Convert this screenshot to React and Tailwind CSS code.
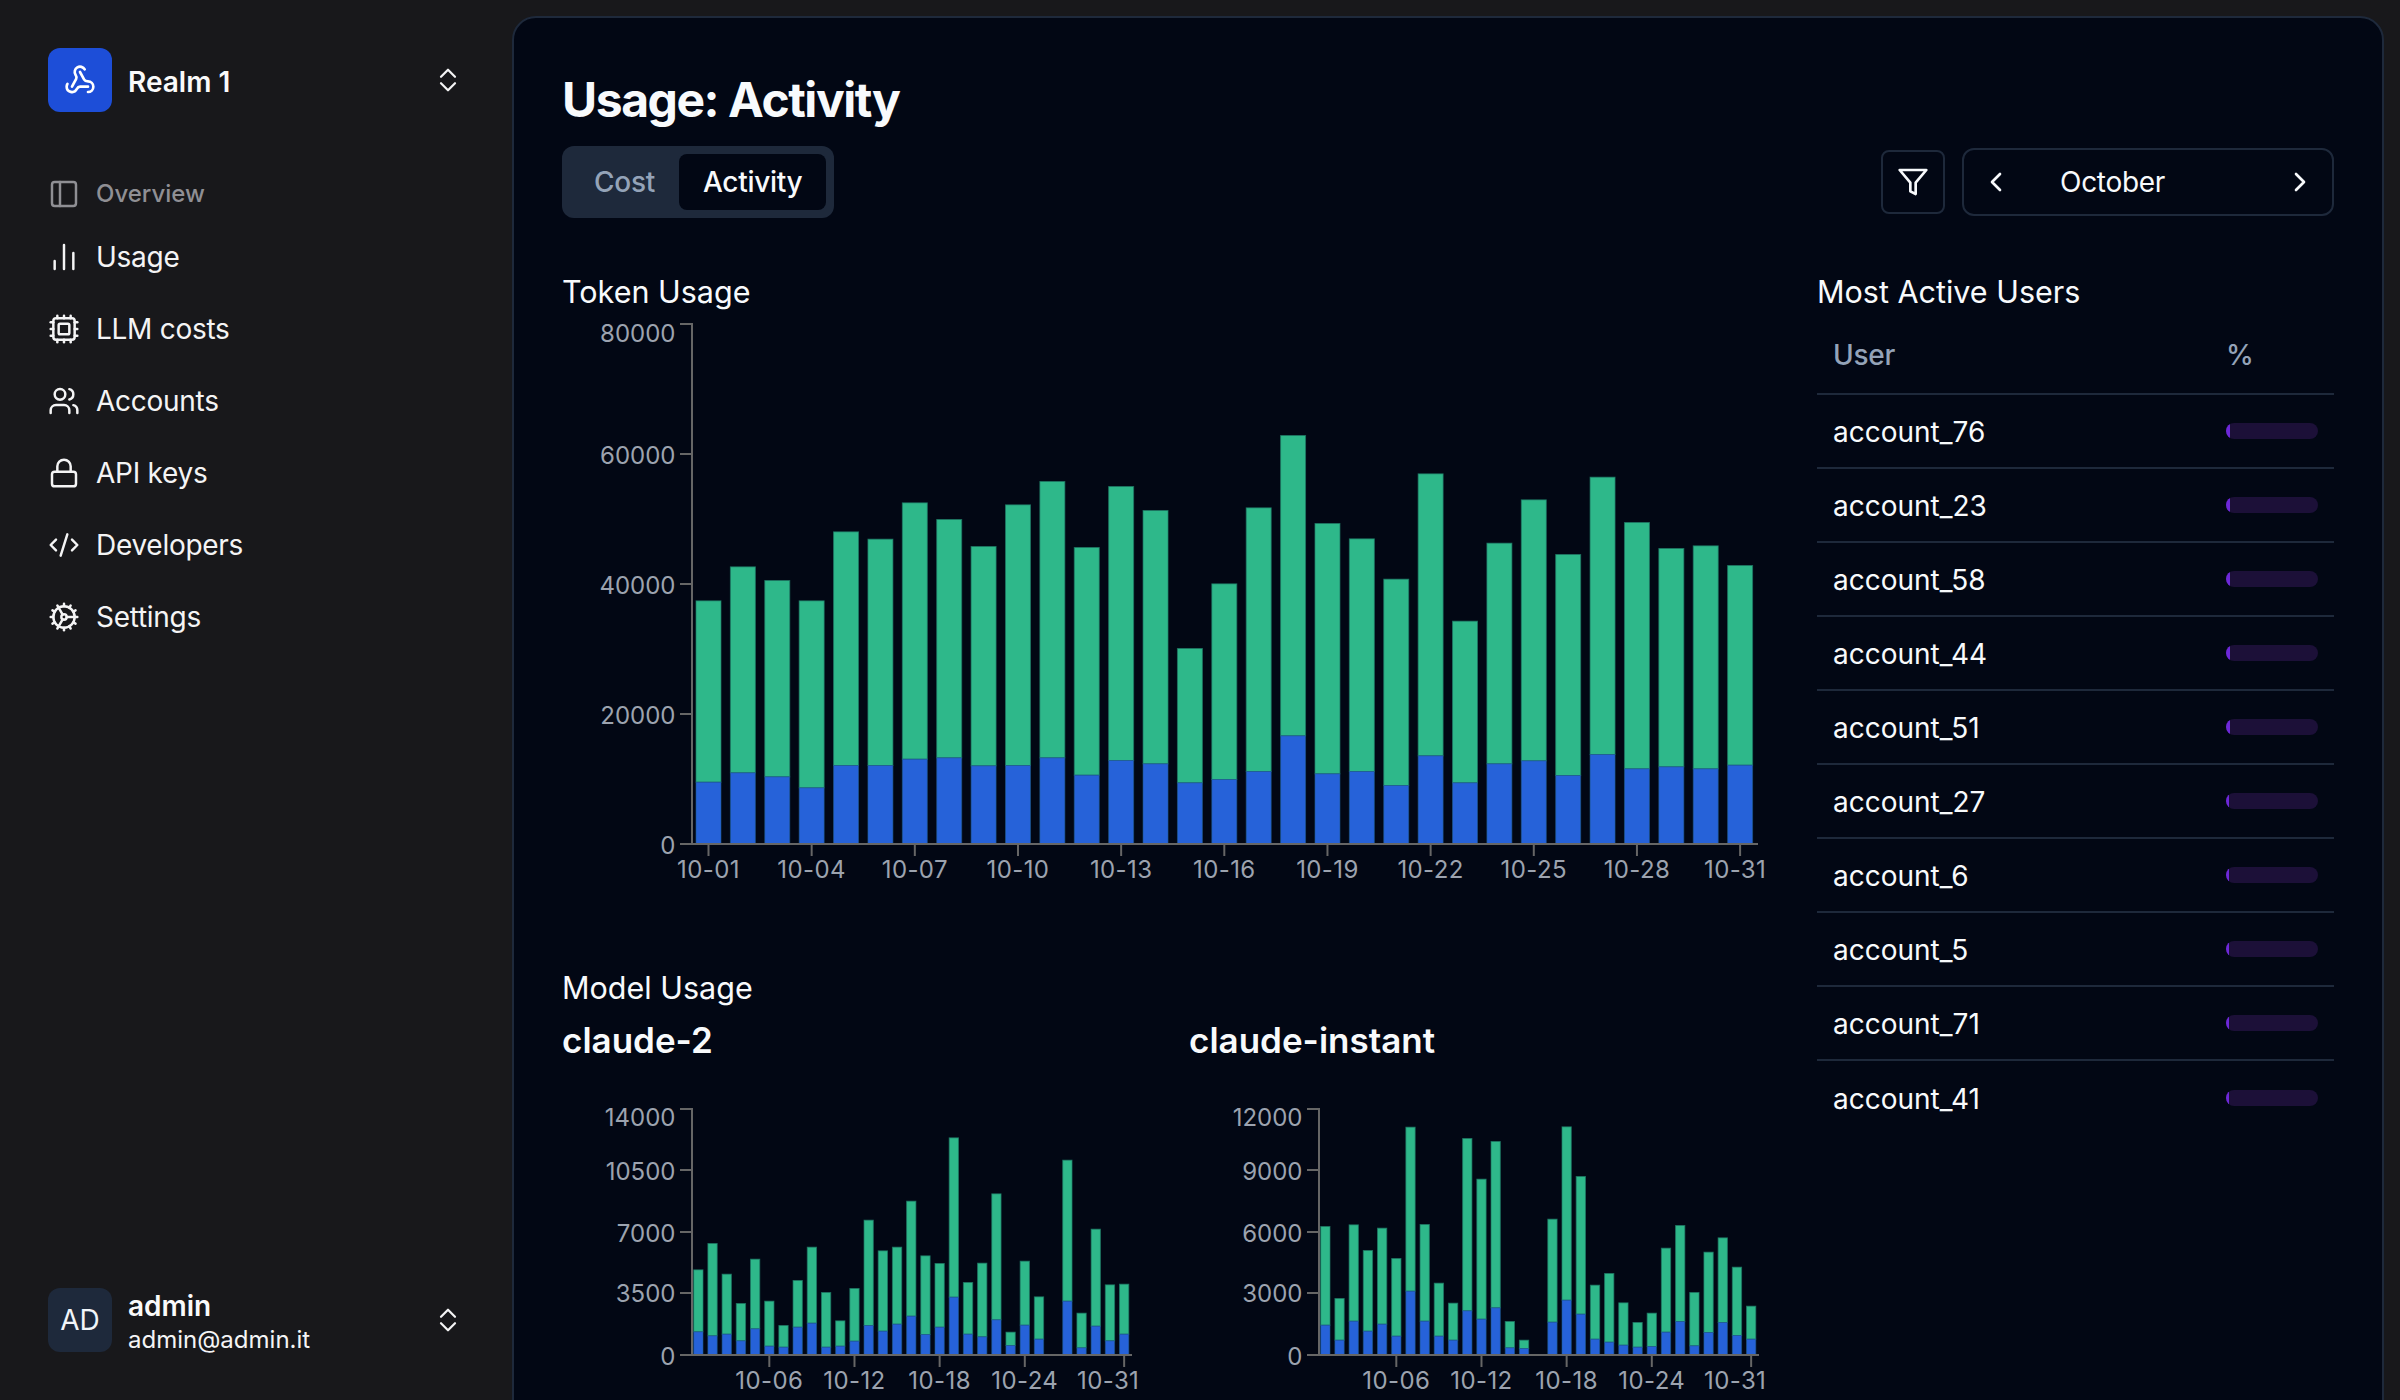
import React from "react";
import { PanelLeft, ChartNoAxesColumn, Cpu, Users, Lock, CodeXml, Cog, Webhook, ChevronLeft, ChevronRight } from "lucide-react";

const FONT = { fontFamily: "Inter, sans-serif" };

// Reference measurements, in zoomed pixels: total top / blue top per day (null = no bar).
const MAIN_TOP = [601,499,540,601,394,416,307,357,438,313,243,441,258,330,744,550,322,105,369,415,536,220,662,428,298,462,230,366,444,436,495];
const MAIN_BLUE = [1145,1117,1129,1162,1095,1095,1076,1072,1096,1095,1072,1124,1080,1090,1147,1137,1113,1006,1120,1113,1155,1066,1147,1090,1081,1125,1062,1105,1099,1105,1094];
const C2_TOP = [624,545,637,725,592,718,791,656,556,692,777,680,475,567,556,418,582,605,228,662,604,396,811,598,705,null,295,754,502,669,667];
const C2_BLUE = [810,822,817,837,801,853,856,796,784,856,853,838,791,808,787,763,818,796,706,817,825,774,851,790,832,null,718,858,793,837,817];
const CI_TOP = [494,710,489,566,499,590,196,488,664,724,230,352,239,779,835,null,472,195,344,670,635,723,782,754,559,491,692,571,528,616,733];
const CI_BLUE = [790,835,778,808,787,823,688,778,823,835,747,772,738,858,860,null,781,715,757,832,841,850,856,854,811,779,852,812,782,821,832];

function Chart({ width, height, axisX, axisRight, axisTop, baseY, barW, barOff, tops, blues, refBase, yLabels, xTicks }) {
  const pitch = (axisRight - axisX) / 31;
  const h = (v) => (refBase - v) / 3;
  return (
    <svg width={width} height={height} className="block overflow-visible" style={FONT}>
      {tops.map((t, i) => {
        if (t === null) return null;
        const x = axisX + barOff + i * pitch;
        const total = h(t);
        const blue = h(blues[i]);
        return (
          <g key={i}>
            <rect x={x + 0.5} y={baseY - total + 0.5} width={barW - 1} height={total - blue} fill="#2eb88a" stroke="#1f7a66" strokeOpacity="0.7" strokeWidth="1" />
            <rect x={x + 0.5} y={baseY - blue + 0.5} width={barW - 1} height={blue - 0.5} fill="#2662d9" stroke="#1f5c8f" strokeOpacity="0.6" strokeWidth="1" />
          </g>
        );
      })}
      <path d={`M${axisX - 12} ${axisTop}H${axisX}V${baseY}H${axisRight}`} fill="none" stroke="#666666" strokeWidth="2" />
      {yLabels.map(([label, y, ty], i) => (
        <g key={i}>
          <line x1={axisX - 12} x2={axisX} y1={y} y2={y} stroke="#666666" strokeWidth="2" />
          <text x={axisX - 16.5} y={ty} textAnchor="end" dominantBaseline="central" fontSize="24" fill="#9ca3af">{label}</text>
        </g>
      ))}
      {xTicks.map(([label, i, anchorShift], k) => {
        const cx = axisX + barOff + barW / 2 + i * pitch;
        return (
          <g key={k}>
            <line x1={cx} x2={cx} y1={baseY} y2={baseY + 12} stroke="#666666" strokeWidth="2" />
            <text x={cx + anchorShift} y={baseY + 25} textAnchor="middle" dominantBaseline="central" fontSize="24" letterSpacing="0.4" fill="#9ca3af">{label}</text>
          </g>
        );
      })}
    </svg>
  );
}

function UpDown() {
  return (
    <svg width="20" height="28" viewBox="0 0 20 28" fill="none" stroke="#f4f4f5" strokeWidth="2.2" strokeLinecap="round" strokeLinejoin="round">
      <path d="M3 10.8 10 3.7l7 7.1" />
      <path d="M3 17.2 10 24.3l7-7.1" />
    </svg>
  );
}

const NAV = [
  [ChartNoAxesColumn, "Usage"],
  [Cpu, "LLM costs"],
  [Users, "Accounts"],
  [Lock, "API keys"],
  [CodeXml, "Developers"],
  [Cog, "Settings"],
];

const USERS = [
  ["account_76", 4], ["account_23", 3.5], ["account_58", 3.5], ["account_44", 3.5], ["account_51", 3.5],
  ["account_27", 3], ["account_6", 3], ["account_5", 3], ["account_71", 3], ["account_41", 3],
];

export default function App() {
  return (
    <div className="flex h-[1400px] w-[2400px] overflow-hidden bg-[#18181b] text-[#f8fafc]" style={FONT}>
      <aside className="flex h-[1400px] w-[512px] shrink-0 flex-col pl-[48px] pr-[54px]">
        <div className="mt-[48px] flex h-[64px] items-center">
          <div className="flex h-[64px] w-[64px] items-center justify-center rounded-[12px] bg-[#1d4ed8]">
            <Webhook size={32} strokeWidth={2} color="#ffffff" />
          </div>
          <span className="ml-[16px] pt-[3px] text-[28px] font-semibold leading-[36px] text-[#fafafa]">Realm 1</span>
          <div className="ml-auto"><UpDown /></div>
        </div>
        <div className="mt-[58px] flex h-[48px] items-center gap-[16px] text-[24px] font-medium text-[#8f8f94]">
          <PanelLeft size={32} strokeWidth={1.85} />
          <span>Overview</span>
        </div>
        <nav className="mt-[7px] flex flex-col gap-[8px]">
          {NAV.map(([Icon, label]) => (
            <div key={label} className="flex h-[64px] items-center gap-[16px] text-[28px] tracking-[-0.01em] text-[#f4f4f5]">
              <Icon size={32} strokeWidth={1.85} />
              <span>{label}</span>
            </div>
          ))}
        </nav>
        <div className="mt-auto mb-[48px] flex h-[64px] items-center">
          <div className="flex h-[64px] w-[64px] items-center justify-center rounded-[12px] bg-[#1e293b] text-[28px] text-[#f1f5f9]">AD</div>
          <div className="ml-[16px] flex flex-col pt-[3px]">
            <span className="text-[28px] font-semibold leading-[36px] text-[#fafafa]">admin</span>
            <span className="text-[24px] leading-[32px] text-[#f4f4f5]">admin@admin.it</span>
          </div>
          <div className="ml-auto"><UpDown /></div>
        </div>
      </aside>

      <main className="mt-[16px] mr-[16px] h-[1400px] min-w-0 flex-1 rounded-t-[24px] border-2 border-[#1e293b] bg-[#020714] px-[48px] pt-[52px]">
        <h1 className="text-[48px] font-bold leading-[60px] tracking-[-0.03em] text-[#f8fafc]">Usage: Activity</h1>

        <div className="mt-[16px] flex h-[72px] items-center justify-between">
          <div className="flex h-[72px] items-center rounded-[12px] bg-[#1e293b] p-[8px] text-[28px] font-medium tracking-[-0.01em]">
            <div className="flex h-[56px] items-center rounded-[8px] px-[24px] text-[#94a3b8]">Cost</div>
            <div className="flex h-[56px] items-center rounded-[8px] bg-[#020714] px-[24px] text-[#f8fafc]">Activity</div>
          </div>
          <div className="flex items-center gap-[17px]">
            <div className="flex h-[64px] w-[64px] items-center justify-center rounded-[8px] border-2 border-[#1e293b]">
              <svg width="32" height="32" viewBox="0 0 24 24" fill="none" stroke="#f8fafc" strokeWidth="2" strokeLinecap="round" strokeLinejoin="round">
                <polygon points="22 3 2 3 10 12.46 10 19 14 21 14 12.46 22 3" />
              </svg>
            </div>
            <div className="flex h-[68px] w-[372px] items-center rounded-[12px] border-2 border-[#1e293b] pl-[16px] pr-[16px] text-[28px]">
              <ChevronLeft size={32} strokeWidth={2} />
              <span className="ml-[48px] tracking-[-0.01em]">October</span>
              <ChevronRight size={32} strokeWidth={2} className="ml-auto" />
            </div>
          </div>
        </div>

        <div className="mt-[48px] flex justify-between">
          <div className="w-[1208px]">
            <h2 className="pt-[2px] text-[30.5px] leading-[48px] text-[#f8fafc]">Token Usage</h2>
            <div>
              <Chart width={1208} height={600} axisX={130} axisRight={1196} axisTop={8} baseY={528} barW={26} barOff={3.5}
                tops={MAIN_TOP} blues={MAIN_BLUE} refBase={1332}
                yLabels={[["80000",8,17],["60000",138,139],["40000",268,269],["20000",398,399],["0",528,529]]}
                xTicks={[["10-01",0,0],["10-04",3,0],["10-07",6,0],["10-10",9,0],["10-13",12,0],["10-16",15,0],["10-19",18,0],["10-22",21,0],["10-25",24,0],["10-28",27,0],["10-31",30,-5]]}
              />
            </div>
            <h2 className="mt-[48px] text-[30.5px] leading-[48px] text-[#f8fafc]">Model Usage</h2>
            <div className="mt-[4px] flex justify-between">
              <div className="w-[581px]">
                <h3 className="text-[35px] font-semibold leading-[48px] text-[#f8fafc]">claude-2</h3>
                <div className="mt-[44px]">
                  <Chart width={581} height={300} axisX={130} axisRight={570} axisTop={1} baseY={247} barW={10.3} barOff={1.2}
                    tops={C2_TOP} blues={C2_BLUE} refBase={881}
                    yLabels={[["14000",1,9],["10500",62,63],["7000",124,125],["3500",185,185],["0",247,248]]}
                    xTicks={[["10-06",5,0],["10-12",11,0],["10-18",17,0],["10-24",23,0],["10-31",30,-16]]}
                  />
                </div>
              </div>
              <div className="w-[581px]">
                <h3 className="text-[35px] font-semibold leading-[48px] text-[#f8fafc]">claude-instant</h3>
                <div className="mt-[44px]">
                  <Chart width={581} height={300} axisX={130} axisRight={570} axisTop={1} baseY={247} barW={10.3} barOff={1.2}
                    tops={CI_TOP} blues={CI_BLUE} refBase={881}
                    yLabels={[["12000",1,9],["9000",62,63],["6000",124,125],["3000",185,185],["0",247,248]]}
                    xTicks={[["10-06",5,0],["10-12",11,0],["10-18",17,0],["10-24",23,0],["10-31",30,-16]]}
                  />
                </div>
              </div>
            </div>
          </div>

          <div className="w-[517px]">
            <h2 className="pt-[2px] text-[30.5px] leading-[48px] text-[#f8fafc]">Most Active Users</h2>
            <div className="flex h-[79px] items-center border-b-2 border-[#1e293b] pl-[16px] text-[28px] font-medium tracking-[-0.01em] text-[#94a3b8]">
              <span className="w-[393px]">User</span>
              <span>%</span>
            </div>
            {USERS.map(([name, fill], i) => (
              <div key={name} className={i < USERS.length - 1 ? "flex h-[74px] items-center border-b-2 border-[#1e293b] pl-[16px] text-[28px]" : "flex h-[74px] items-center pl-[16px] text-[28px]"}>
                <span className="w-[393px] pt-[2px]">{name}</span>
                <div className="h-[16px] w-[92px] overflow-hidden rounded-full bg-[#1c1038]">
                  <div className="h-full bg-[#6d28d9]" style={{ width: fill }} />
                </div>
              </div>
            ))}
          </div>
        </div>
      </main>
    </div>
  );
}
